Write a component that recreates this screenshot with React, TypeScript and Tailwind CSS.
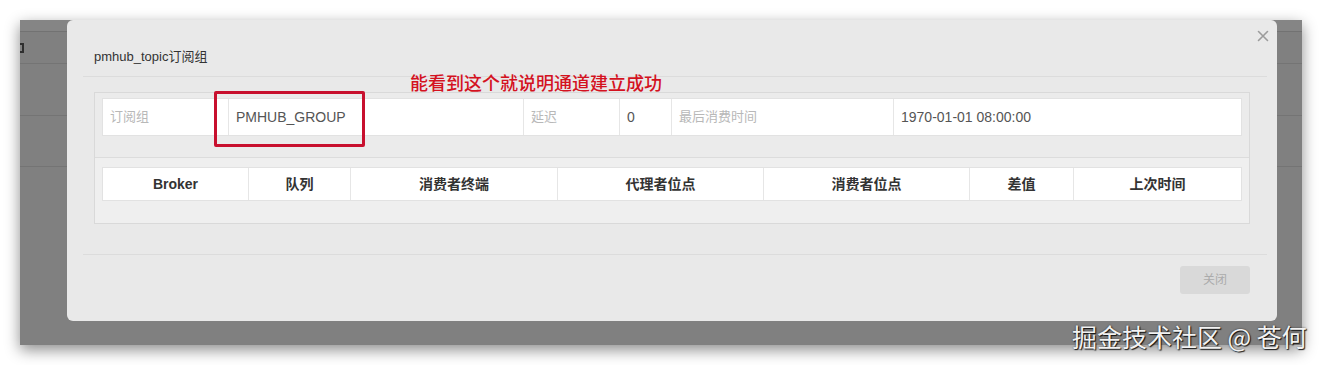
import React from "react";

const infoCols = [
  { w: "w-[125px]", text: "订阅组", label: true },
  { w: "w-[295px]", text: "PMHUB_GROUP", label: false },
  { w: "w-[96px]", text: "延迟", label: true },
  { w: "w-[52px]", text: "0", label: false },
  { w: "w-[222px]", text: "最后消费时间", label: true },
  { w: "flex-1", text: "1970-01-01 08:00:00", label: false },
];

const headCols = [
  { w: "w-[145px]", text: "Broker" },
  { w: "w-[102px]", text: "队列" },
  { w: "w-[207px]", text: "消费者终端" },
  { w: "w-[206px]", text: "代理者位点" },
  { w: "w-[206px]", text: "消费者位点" },
  { w: "w-[104px]", text: "差值" },
  { w: "flex-1", text: "上次时间" },
];

export default function App() {
  return (
    <div className="relative w-[1322px] h-[365px] overflow-hidden bg-white pt-[20px] pl-[20px] font-['Liberation_Sans','Noto_Sans_CJK_SC',sans-serif]">
      <div className="relative w-[1282px] h-[325px] overflow-hidden bg-[#808080] shadow-[0_5px_14px_rgba(0,0,0,0.45)]">
        {/* dimmed page rows behind backdrop */}
        <div className="flex flex-col">
          <div className="h-[12px] bg-[#858585] border-b border-[#727272]" />
          <div className="h-[32px] border-b border-[#747474]" />
          <div className="h-[52px] border-b border-[#747474]" />
          <div className="h-[51px] border-b border-[#747474]" />
        </div>
        {/* partial glyph of the dimmed page, cut by the frame */}
        <div className="absolute left-0 top-[23px] w-[4px] h-[10px] border-r-[2px] border-t-[2px] border-b-[2px] border-[#2e2e2e]" />

        {/* modal */}
        <div className="absolute left-[47px] top-0 w-[1210px] h-[301px] rounded-[6px] bg-[#e9e9e9] flex flex-col">
          <div className="h-[57px] ml-[16px] mr-[10px] border-b border-[#dcdcdc] pl-[11px] pb-[11px] flex items-end">
            <span className="text-[13px] leading-[16px] text-[#333]">pmhub_topic订阅组</span>
          </div>

          <div className="px-[27px] pt-[15px]">
            <div className="h-[132px] border border-[#d9d9d9] bg-[#eeeeee] flex flex-col">
              <div className="h-[65px] px-[7px] pt-[5px] border-b border-[#dcdcdc] bg-[#ebebeb]">
                <div className="flex h-[38px] bg-white border border-[#e2e2e2]">
                  {infoCols.map((c, i) => (
                    <div
                      key={i}
                      className={`${c.w} ${i > 0 ? "border-l border-[#e6e6e6]" : ""} flex items-center px-[7px] ${
                        c.label ? "text-[13px] text-[#b8b8b8]" : "text-[14px] text-[#555]"
                      }`}
                    >
                      {c.text}
                    </div>
                  ))}
                </div>
              </div>
              <div className="flex-1 px-[7px] pt-[9px] bg-[#efefef]">
                <div className="flex h-[34px] bg-white border border-[#e2e2e2]">
                  {headCols.map((c, i) => (
                    <div
                      key={i}
                      className={`${c.w} ${i > 0 ? "border-l border-[#e6e6e6]" : ""} flex items-center justify-center text-[14px] font-bold text-[#333]`}
                    >
                      {c.text}
                    </div>
                  ))}
                </div>
              </div>
            </div>
          </div>

          <div className="mt-[30px] ml-[16px] mr-[10px] border-t border-[#dcdcdc] pt-[11px] pr-[17px] flex justify-end">
            <div className="w-[70px] h-[28px] rounded-[3px] bg-[#d9d9d9] flex items-center justify-center text-[12px] text-[#ababab]">
              关闭
            </div>
          </div>

          {/* close icon */}
          <svg className="absolute left-[1190px] top-[10px]" width="12" height="12" viewBox="0 0 12 12">
            <path d="M1.5 1.5 L10.5 10.5 M10.5 1.5 L1.5 10.5" stroke="#9c9c9c" strokeWidth="1.6" strokeLinecap="round" />
          </svg>

          {/* annotation */}
          <div className="absolute left-[147px] top-[71px] w-[151px] h-[56px] border-[3px] border-[#c8102e] rounded-[2px]" />
          <div className="absolute left-[343px] top-[51px] text-[18px] leading-[22px] font-medium text-[#d4121f] whitespace-nowrap font-['Noto_Sans_CJK_SC',sans-serif]">
            能看到这个就说明通道建立成功
          </div>
        </div>
      </div>

      <div className="absolute left-[1072px] top-[321px] text-[25px] leading-[30px] text-[#f2f2f2] whitespace-nowrap font-['Noto_Sans_CJK_SC',sans-serif] [text-shadow:1px_1px_1px_rgba(0,0,0,0.85),0_0_2px_rgba(0,0,0,0.6)]">
        掘金技术社区 @ 苍何
      </div>
    </div>
  );
}
